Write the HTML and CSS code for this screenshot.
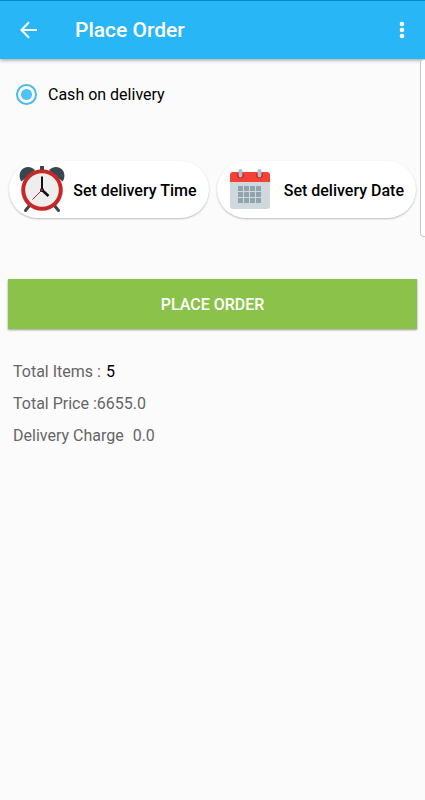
FILE: index.html
```
<!DOCTYPE html>
<html lang="en">
  <head>
    <meta charset="UTF-8">
    <meta name="viewport" content="width=device-width, initial-scale=1.0">
    <title>Place Order</title>
    <link rel="stylesheet" href="styles.css">
  </head>
  <body>
    <!-- App bar -->
    <header class="appbar">
      <button class="icon-btn" type="button" aria-label="Back">
        <svg width="18" height="18" viewBox="0 0 18 18" fill="none" stroke="#fff" stroke-width="2">
          <path d="M17 9H2M9 1.2L1.5 9L9 16.8"/>
        </svg>
      </button>
      <h1 class="title">Place Order</h1>
      <button class="icon-btn" type="button" aria-label="More options">
        <svg width="6" height="18" viewBox="0 0 6 18" fill="#fff">
          <circle cx="3" cy="3" r="2.3"/>
          <circle cx="3" cy="9" r="2.3"/>
          <circle cx="3" cy="15" r="2.3"/>
        </svg>
      </button>
    </header>
    <div class="edge-panel"></div>

    <main class="content">
      <label class="payment">
        <input class="radio" type="radio" name="payment" checked>
        <span>Cash on delivery</span>
      </label>

      <div class="schedule">
        <button class="pill" type="button">
          <svg class="pill-icon" width="48" height="48" viewBox="0 0 48 48">
            <path d="M12 40L7.500 45.500M36 40l4.500 5.500" stroke="#37474f" stroke-width="3" stroke-linecap="round"/>
            <rect x="22" y="1" width="4" height="6" fill="#37474f"/>
            <path d="M3.500 16.500C-1 10 3 2 10 2c3 0 5.500 1.500 7 3z" fill="#37474f"/>
            <path d="M44.500 16.500C49 10 45 2 38 2c-3 0-5.500 1.500-7 3z" fill="#37474f"/>
            <circle cx="24" cy="25" r="20.800" fill="#c62828"/>
            <circle cx="24" cy="25" r="16.800" fill="#eee"/>
            <path d="M24 25L14.500 34.500" stroke="#c62828" stroke-width="1"/>
            <path d="M24 25V11.500" stroke="#111" stroke-width="2"/>
            <path d="M24 25l6.500 6" stroke="#111" stroke-width="2.500"/>
            <circle cx="24" cy="25" r="2" fill="#111"/>
            <circle cx="24" cy="25" r="1" fill="#c62828"/>
          </svg>
          <span class="pill-text">Set delivery Time</span>
        </button>
        <button class="pill" type="button">
          <svg class="pill-icon" width="48" height="48" viewBox="0 0 48 48">
            <path d="M4 12h40v29a3 3 0 0 1-3 3H7a3 3 0 0 1-3-3z" fill="#cfd8dc"/>
            <path d="M4 17V10a3 3 0 0 1 3-3h34a3 3 0 0 1 3 3v7z" fill="#f44336"/>
            <circle cx="14.500" cy="10" r="3.200" fill="#b71c1c"/>
            <circle cx="33.500" cy="10" r="3.200" fill="#b71c1c"/>
            <path d="M14.500 6v4.500M33.500 6v4.500" stroke="#b0bec5" stroke-width="4" stroke-linecap="round"/>
            <g fill="#90a4ae">
              <path d="M12 21h5v5h-5zM18 21h5v5h-5zM24 21h5v5h-5zM30 21h5v5h-5z"/>
              <path d="M12 27h5v5h-5zM18 27h5v5h-5zM24 27h5v5h-5zM30 27h5v5h-5z"/>
              <path d="M12 33h5v5h-5zM18 33h5v5h-5zM24 33h5v5h-5zM30 33h5v5h-5z"/>
            </g>
          </svg>
          <span class="pill-text">Set delivery Date</span>
        </button>
      </div>

      <button class="order-btn" type="submit">PLACE ORDER</button>

      <div class="summary">
        <p>Total Items : <span class="count">5</span></p>
        <p>Total Price :6655.0</p>
        <p>Delivery Charge <span class="charge">0.0</span></p>
      </div>
    </main>
  </body>
</html>
```
FILE: styles.css
```
* {
  box-sizing: border-box;
}

body {
  margin: 0;
  background: #fbfbfb;
  color: #000;
  font-family: Roboto, "Liberation Sans", sans-serif;
  font-size: 16px;
}

button {
  border: none;
  font-family: inherit;
  cursor: pointer;
}

.appbar {
  display: flex;
  align-items: center;
  height: 59px;
  padding: 0 12px 0 10px;
  border-top: 1px solid #0288d1;
  background: #29b6f6;
  box-shadow: 0 1px 4px rgba(0, 0, 0, 0.4);
}

.icon-btn {
  display: flex;
  justify-content: center;
  padding: 8px;
  min-width: 22px;
  background: none;
}

.appbar .icon-btn:first-child {
  width: 38px;
}

.title {
  flex: 1;
  margin: 0;
  padding-left: 27px;
  color: #fff;
  font-size: 21px;
  font-weight: 500;
}

/* handle on the right side of the screen */
.edge-panel {
  position: absolute;
  top: 59px;
  right: 0;
  width: 5px;
  height: 178px;
  border: 1px solid #c8c8c8;
  border-right: none;
  border-radius: 4px 0 0 4px;
  background: #fff;
}

.content {
  padding: 24px 8px;
}

.payment {
  display: flex;
  align-items: center;
  gap: 11px;
  padding-left: 8px;
  height: 22px;
}

.radio {
  appearance: none;
  width: 21px;
  height: 21px;
  margin: 0;
  border: 2px solid #4fb8e3;
  border-radius: 50%;
  background: radial-gradient(circle, #4fc3f7 5px, transparent 6px);
}

.schedule {
  display: flex;
  gap: 8px;
  margin: 56px 1px 0;
}

.pill {
  display: flex;
  align-items: center;
  flex: 1;
  height: 57px;
  padding: 0 12px 2px 9px;
  border-radius: 29px;
  background: #fff;
  box-shadow: 0 1px 2px rgba(0, 0, 0, 0.25);
  color: #000;
  font-size: 16px;
  font-weight: 500;
}

.pill-icon {
  flex: none;
}

.pill-text {
  flex: 1;
  padding-top: 4px;
  text-align: right;
  white-space: nowrap;
}

.order-btn {
  display: block;
  width: 100%;
  height: 50px;
  margin-top: 61px;
  padding-top: 2px;
  background: #8bc34a;
  box-shadow: 0 1px 2px rgba(0, 0, 0, 0.4);
  color: #fff;
  font-size: 16px;
  font-weight: 500;
}

.summary {
  margin-top: 33px;
  padding-left: 5px;
  color: #666;
  line-height: 20px;
}

.summary p {
  margin: 0 0 12px;
}

.count {
  margin-left: 1px;
  color: #000;
}

.charge {
  margin-left: 5px;
}
```
